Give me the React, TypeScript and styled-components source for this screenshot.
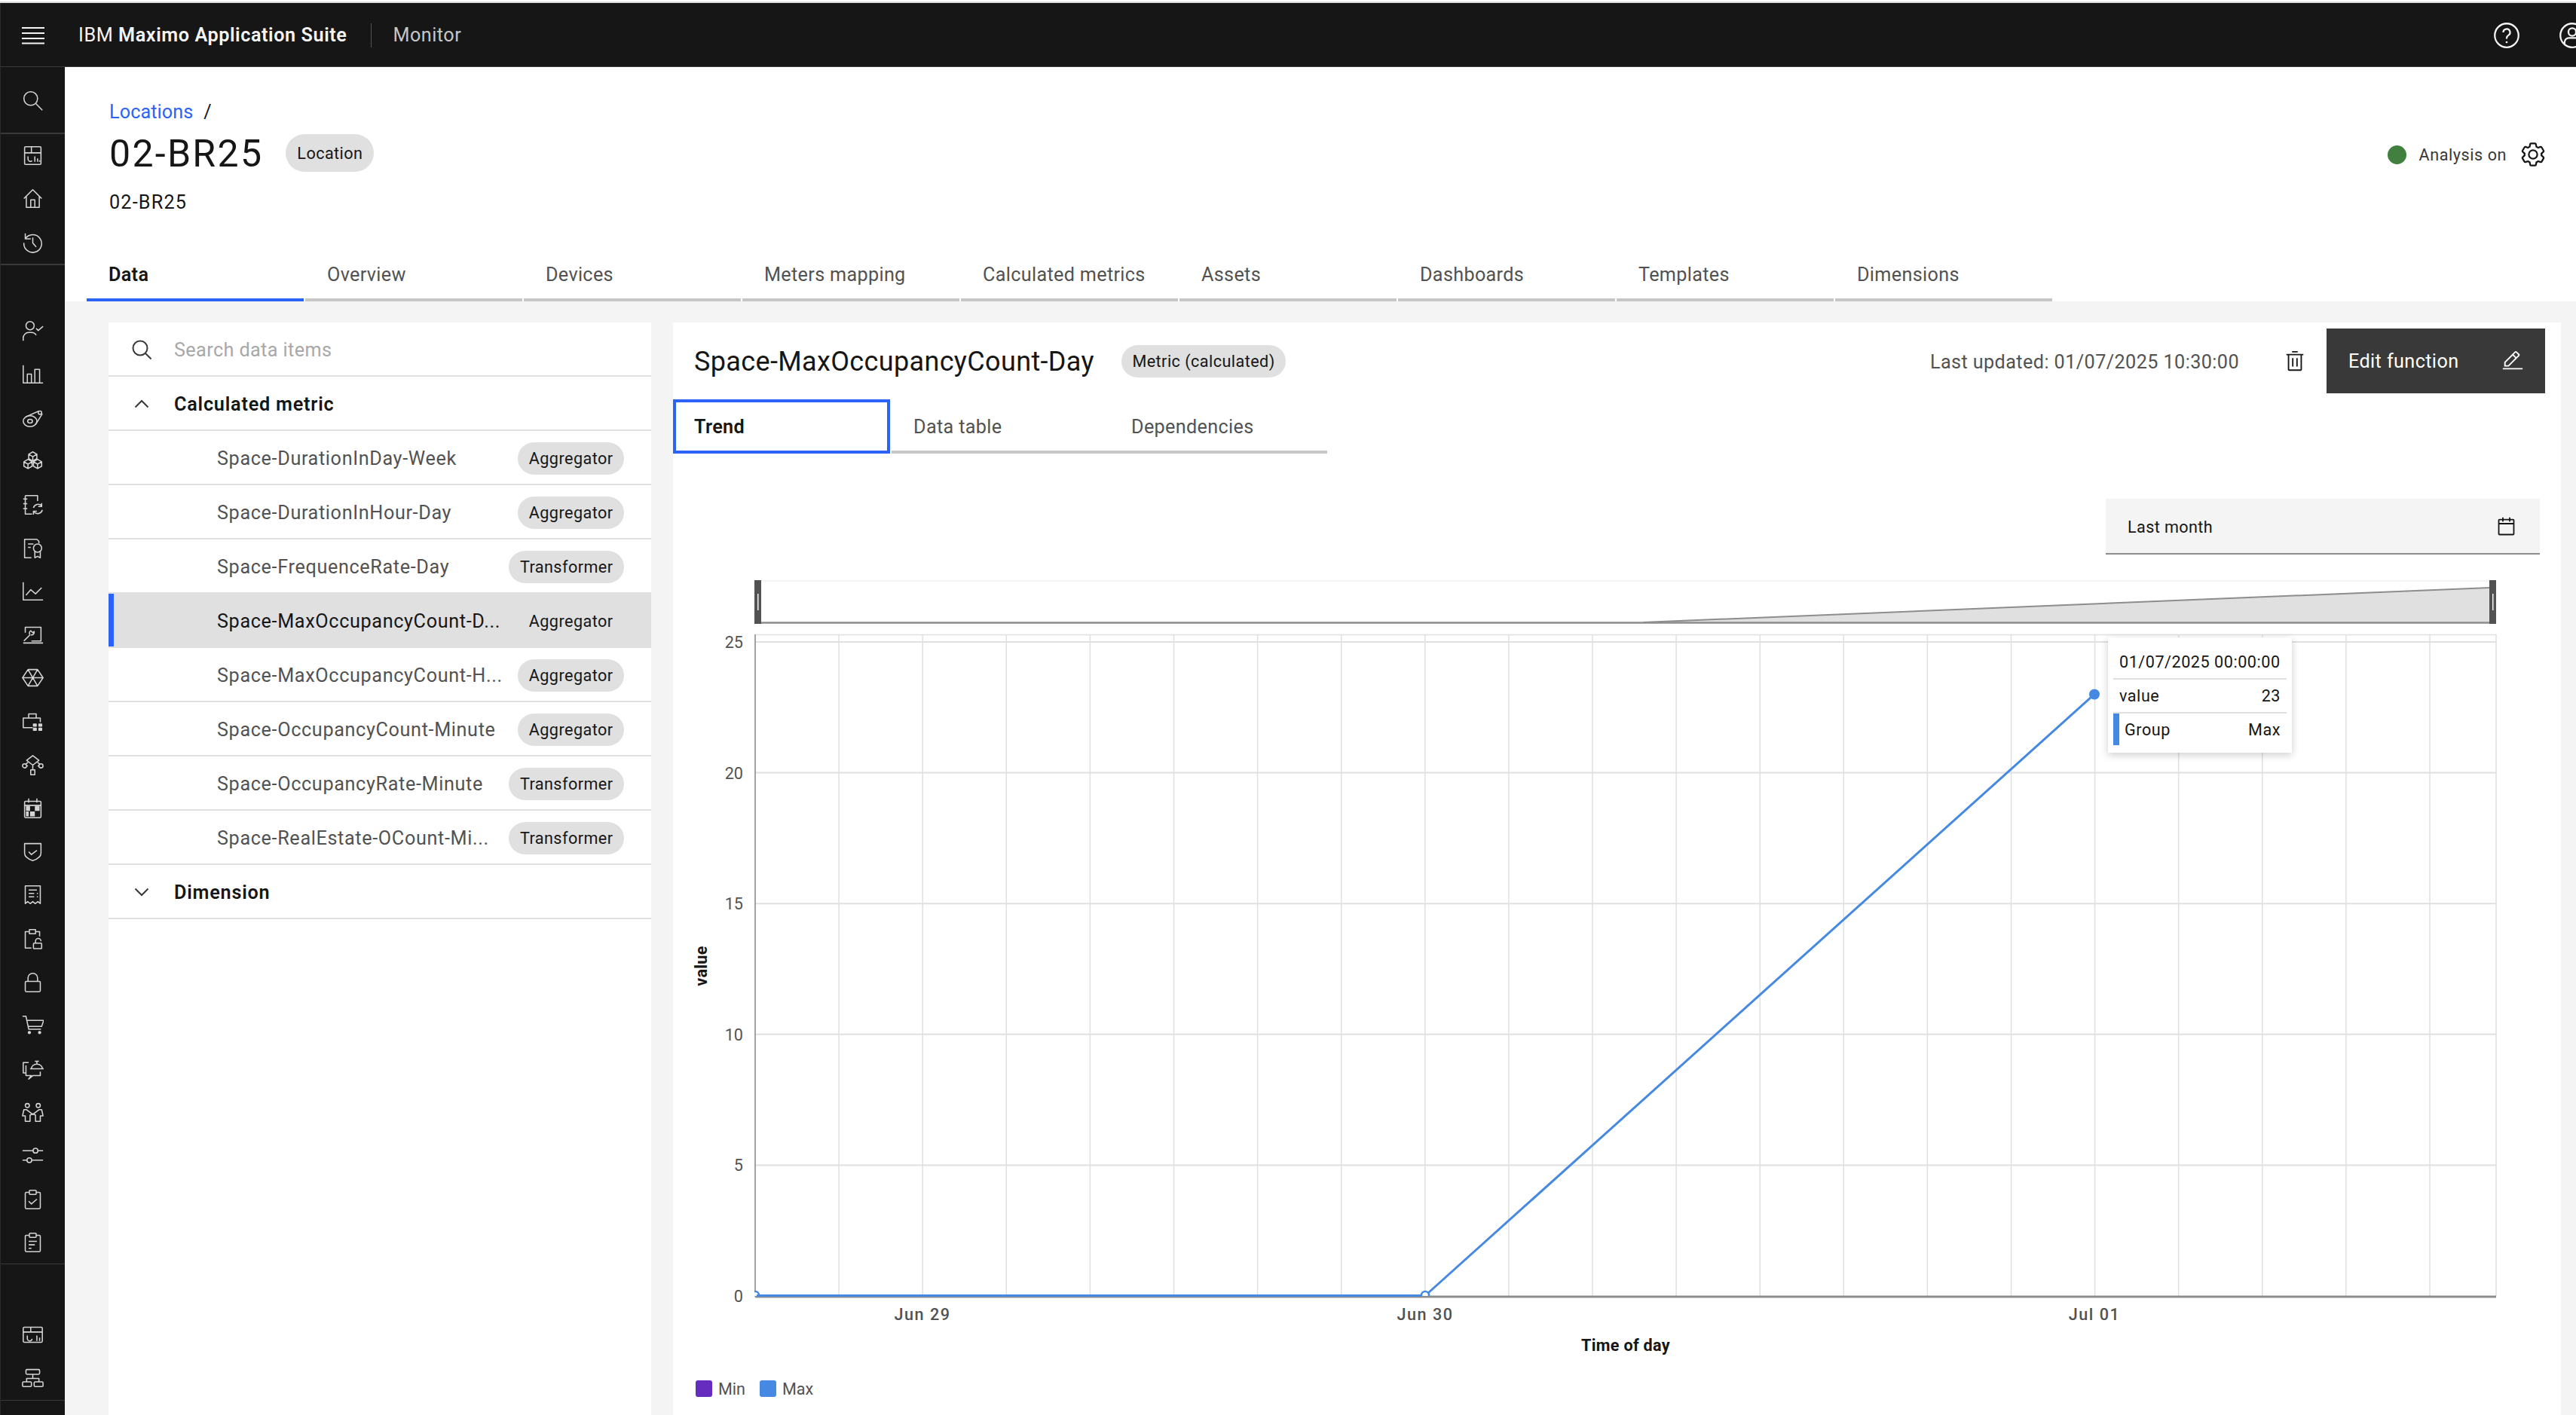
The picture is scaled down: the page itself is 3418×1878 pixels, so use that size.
import React from 'react';
import styled, { createGlobalStyle } from 'styled-components';

const GlobalStyle = createGlobalStyle`
  html, body { margin: 0; padding: 0; background: #fff; }
  body { font-family: Roboto, "Liberation Sans", sans-serif; color: #161616; }
  * { box-sizing: border-box; }
`;

const BLUE = '#2b63f6';
const CHART_BLUE = '#4589e3';

const Page = styled.div`
  width: 3418px;
  height: 1878px;
  padding-top: 2px;
  overflow: hidden;
  display: flex;
  flex-direction: column;
  background: #fff;
`;

const TopStrip = styled.div`
  height: 2px;
  flex: none;
  background: #dcdcdc;
`;

const Header = styled.header`
  height: 85px;
  flex: none;
  padding-top: 1px;
  display: flex;
  align-items: center;
  background: #161616;
  border-bottom: 1px solid #393939;
  border-left: 1px solid #2a2a2a;
  color: #f4f4f4;
`;

const Burger = styled.svg`
  width: 30px;
  height: 24px;
  margin-left: 28px;
  margin-right: 45px;
  flex: none;
`;

const Brand = styled.div`
  font-size: 25.2px;
  letter-spacing: 0.58px;
  white-space: nowrap;
  b { font-weight: 600; }
`;

const HeaderDivider = styled.div`
  width: 1px;
  height: 32px;
  margin: 0 28px 0 32px;
  background: #525252;
`;

const AppName = styled.div`
  font-size: 25.2px;
  letter-spacing: 0.5px;
  color: #c6c6c6;
`;

const HeaderActions = styled.div`
  margin-left: auto;
  margin-right: -13px;
  display: flex;
  gap: 51px;
  svg { width: 36px; height: 36px; flex: none; }
`;

const Body = styled.div`
  flex: 1;
  min-height: 0;
  display: flex;
`;

const Rail = styled.nav`
  width: 86px;
  flex: none;
  background: #161616;
  border-left: 1px solid #2a2a2a;
  display: flex;
  flex-direction: column;
`;

const RailGroup = styled.div<{ $top: number; $bottom: number }>`
  padding: ${(p) => p.$top}px 0 ${(p) => p.$bottom}px;
  border-bottom: 2px solid #393939;
  &:nth-child(n + 3) { border-bottom-width: 1px; }
`;

const RailButton = styled.div`
  height: 57.6px;
  display: flex;
  align-items: center;
  justify-content: center;
  color: #d4d4d4;
`;

const RailIcon = styled.svg`
  width: 29px;
  height: 29px;
  fill: none;
  stroke: currentColor;
  stroke-width: 1.7;
  stroke-linejoin: round;
`;

const Main = styled.main`
  flex: 1;
  min-width: 0;
  display: flex;
  flex-direction: column;
`;

const PageHead = styled.section`
  height: 311px;
  flex: none;
  background: #fff;
  display: flex;
  flex-direction: column;
`;

const HeadTop = styled.div`
  flex: 1;
  padding: 44px 41px 0 59px;
  display: flex;
  justify-content: space-between;
`;

const Crumb = styled.div`
  height: 30px;
  padding-top: 1px;
  font-size: 25.2px;
  line-height: 30px;
  letter-spacing: 0.1px;
  a { color: ${BLUE}; text-decoration: none; }
  span { margin-left: 14px; }
`;

const TitleRow = styled.div`
  margin-top: 14px;
  display: flex;
  align-items: center;
  gap: 30px;
`;

const PageTitle = styled.h1`
  margin: 0;
  padding-top: 2px;
  font-size: 50px;
  line-height: 50px;
  font-weight: 400;
  letter-spacing: 2.3px;
`;

const Tag = styled.span`
  display: inline-flex;
  align-items: center;
  height: 43px;
  padding: 0 14.5px;
  border-radius: 25px;
  font-size: 21.6px;
  letter-spacing: 0.45px;
  white-space: nowrap;
  background: #e0e0e0;
  color: #161616;
`;

const BigTag = styled(Tag)`
  height: 50px;
  padding: 0 15px;
`;

const SubTitle = styled.div`
  margin-top: 25px;
  font-size: 25.2px;
  line-height: 30px;
  letter-spacing: 1.2px;
`;

const Status = styled.div`
  margin-top: 54px;
  height: 36px;
  display: flex;
  align-items: center;
  font-size: 21.6px;
  letter-spacing: 0.55px;
  color: #393939;
  svg { width: 36px; height: 36px; margin-left: 17px; margin-right: -2px; fill: #161616; }
`;

const StatusDot = styled.span`
  width: 25px;
  height: 25px;
  margin-right: 17px;
  border-radius: 50%;
  background: #42803f;
`;

const PageTabs = styled.div`
  margin-left: 29px;
  display: flex;
  gap: 2px;
`;

const Tab = styled.div<{ $active?: boolean }>`
  width: 288px;
  height: 70px;
  padding: 2px 0 0 29px;
  display: flex;
  align-items: center;
  font-size: 25.2px;
  letter-spacing: 0.33px;
  font-weight: ${(p) => (p.$active ? 600 : 400)};
  color: ${(p) => (p.$active ? '#161616' : '#525252')};
  border-bottom: 4px solid ${(p) => (p.$active ? BLUE : '#c6c6c6')};
`;

const Content = styled.div`
  flex: 1;
  min-height: 0;
  padding: 28px 20px 0 58px;
  background: #f4f4f4;
  display: flex;
  gap: 29px;
  overflow: hidden;
`;

const ListPanel = styled.aside`
  width: 720px;
  flex: none;
  background: #fff;
`;

const SearchRow = styled.div`
  height: 72px;
  padding-top: 2px;
  display: flex;
  align-items: center;
  border-bottom: 2px solid #e0e0e0;
  font-size: 25.2px;
  letter-spacing: 0.4px;
  color: #a8a8a8;
`;

const IconSlot = styled.span`
  width: 87px;
  flex: none;
  display: flex;
  justify-content: center;
  svg { display: block; fill: none; stroke: #393939; stroke-width: 2; }
`;

const SectionRow = styled.div`
  height: 72px;
  padding-top: 2px;
  display: flex;
  align-items: center;
  border-bottom: 2px solid #e0e0e0;
  font-size: 25.2px;
  font-weight: 600;
  letter-spacing: 0.8px;
`;

const ItemRow = styled.div<{ $selected?: boolean }>`
  height: 72px;
  padding: 2px 36px 0 144px;
  display: flex;
  align-items: center;
  justify-content: space-between;
  border-bottom: 2px solid #e0e0e0;
  font-size: 25.2px;
  letter-spacing: 0.65px;
  white-space: nowrap;
  color: ${(p) => (p.$selected ? '#161616' : '#525252')};
  background: ${(p) => (p.$selected ? '#e0e0e0' : '#fff')};
  box-shadow: ${(p) => (p.$selected ? `inset 7px 0 0 ${BLUE}` : 'none')};
`;

const ChartPanel = styled.section`
  position: relative;
  flex: 1;
  min-width: 0;
  background: #fff;
  display: flex;
  flex-direction: column;
`;

const PanelToolbar = styled.div`
  margin-top: 8px;
  height: 86px;
  padding: 0 21px 0 28px;
  display: flex;
  align-items: center;
`;

const MetricTitle = styled.h2`
  margin: 0 36px 0 0;
  padding-top: 2px;
  font-size: 36px;
  font-weight: 400;
  letter-spacing: 0.36px;
`;

const Updated = styled.div`
  margin-left: auto;
  padding-top: 2px;
  font-size: 25.2px;
  letter-spacing: 0.42px;
  color: #525252;
`;

const TrashIcon = styled.svg`
  width: 30px;
  height: 30px;
  margin: 0 27px 0 59px;
  fill: #161616;
`;

const EditButton = styled.div`
  width: 290px;
  height: 86px;
  padding: 0 28px 0 29px;
  display: flex;
  align-items: center;
  justify-content: space-between;
  background: #393939;
  color: #fff;
  font-size: 25.2px;
  letter-spacing: 0.4px;
  svg { width: 30px; height: 30px; fill: #fff; }
`;

const PanelTabs = styled.div`
  margin-top: 8px;
  display: flex;
`;

const PanelTab = styled.div<{ $active?: boolean }>`
  width: ${(p) => (p.$active ? 288 : 289)}px;
  margin-right: ${(p) => (p.$active ? 2 : 0)}px;
  height: 72px;
  padding-left: ${(p) => (p.$active ? 24 : 29)}px;
  display: flex;
  align-items: center;
  font-size: 25.2px;
  letter-spacing: 0.35px;
  font-weight: ${(p) => (p.$active ? 600 : 400)};
  color: ${(p) => (p.$active ? '#161616' : '#525252')};
  border: ${(p) => (p.$active ? `4px solid ${BLUE}` : 'none')};
  border-top: 4px solid ${(p) => (p.$active ? BLUE : 'transparent')};
  border-bottom: 4px solid ${(p) => (p.$active ? BLUE : '#c6c6c6')};
`;

const DateField = styled.div`
  align-self: flex-end;
  width: 576px;
  height: 74px;
  margin: 60px 28px 0 0;
  padding: 2px 30px 0 29px;
  display: flex;
  align-items: center;
  justify-content: space-between;
  background: #f4f4f4;
  border-bottom: 2px solid #8d8d8d;
  font-size: 21.6px;
  letter-spacing: 0.4px;
  svg { width: 29px; height: 29px; fill: #161616; }
`;

const ChartSvg = styled.svg`
  display: block;
  width: 2505px;
  height: 1142px;
  flex: none;
  text {
    font-family: Roboto, "Liberation Sans", sans-serif;
    font-size: 21.6px;
    fill: #525252;
  }
`;

const AxisTick = styled.text`
  font-weight: 500;
  letter-spacing: 1.5px;
`;

const AxisTitle = styled.text`
  font-weight: 700;
  letter-spacing: 0.3px;
  && { fill: #161616; }
`;

const Tooltip = styled.div`
  position: absolute;
  left: 1904px;
  top: 418px;
  width: 244px;
  height: 153px;
  padding: 1px 7px 0;
  background: #fff;
  box-shadow: 0 3px 10px rgba(0, 0, 0, 0.2);
  font-size: 21.6px;
  letter-spacing: 0.53px;
  color: #161616;
`;

const TipRow = styled.div<{ $marker?: boolean; $height: number; $pad?: number }>`
  height: ${(p) => p.$height}px;
  padding: ${(p) => p.$pad || 0}px 8px 0 ${(p) => (p.$marker ? 7 : 8)}px;
  display: flex;
  align-items: center;
  justify-content: space-between;
  border-left: ${(p) => (p.$marker ? `8px solid ${CHART_BLUE}` : 'none')};
  &:not(:last-child) { border-bottom: 2px solid #e0e0e0; }
`;

const railGroups: { top: number; bottom: number; icons: React.ReactNode[] }[] = [
  {
    top: 16,
    bottom: 13,
    icons: [<><circle cx="13" cy="13" r="10" /><path d="M20.5 20.5L30 30" /></>],
  },
  {
    top: 0,
    bottom: 0,
    icons: [
      <><rect x="4" y="3" width="24" height="26" rx="1.5" /><path d="M4 12h24M14 3v9M9 17v4a3.5 3.5 0 0 0 6 2.5M19 17v8M23 20v5M26 23v2" /></>,
      <><path d="M3 16L16 3l13 13M6.5 13v16h19V13M13 29V18h6v11" /></>,
      <><path d="M5 11a13 13 0 1 1-2 6M5 3v8h8M16 9v8l5 6" /></>,
    ],
  },
  {
    top: 58,
    bottom: 0,
    icons: [
      <><circle cx="12" cy="8" r="6" /><path d="M2 30v-4a8 8 0 0 1 8-8h4a8 8 0 0 1 7 4M21 12l3 3 7-6" /></>,
      <><path d="M2 3v26h29M8 29V16h6v13M19 29V9h7v20" /></>,
      <><ellipse cx="12" cy="21" rx="10" ry="8" /><ellipse cx="12" cy="21" rx="3.5" ry="2.8" /><path d="M6 14.5L25 6M20 26L30 10" /><circle cx="26.5" cy="8.5" r="2.5" /></>,
      <><path d="M16 3l6 3.5v6.5l-6 3.5-6-3.5V6.5zM10 6.5l6 3.5 6-3.5M16 10v6.5M9 14l6 3.5V24l-6 3.5L3 24v-6.5zM3 17.5L9 21l6-3.5M9 21v6.5M23 14l6 3.5V24l-6 3.5-6-3.5v-6.5zM17 17.5L23 21l6-3.5M23 21v6.5" /></>,
      <><path d="M5 3h18v8M5 3v27h10M2 8h6M2 15h6M2 22h6M17 21a7 7 0 0 1 12-3M29 14v5h-5M30 24a7 7 0 0 1-12 3M17 31v-5h5" /></>,
      <><path d="M22 3H4v27h10M22 3l3 3v3M9 10h8M9 15h4" /><circle cx="23" cy="16" r="6" /><path d="M19 21v9l4-2 4 2v-9" /></>,
      <><path d="M2 3v26h29M6 22l7-8 7 6 9-9" /></>,
      <><path d="M5 13V5h23v20H14M2 28h29M3 25l9-9M12 16a4 4 0 0 1 1-6l3 3 2-2a4 4 0 0 1-5 5" /></>,
      <><path d="M9 4h14l8 12-8 12H9L1 16zM1 16h30M9 4l14 24M23 4L9 28" /></>,
      <><path d="M16 25H2V11h25v6M10 11V5h11v6" /><path d="M17 20h4v3h-4zM25 20h4v3h-4zM17 26h4v3h-4zM25 26h4v3h-4z" fill="currentColor" /></>,
      <><path d="M16 2l9 7-9 7-9-7zM16 16v7M5 15l4-3M27 15l-4-3M13 23h6v7h-6z" /><circle cx="4" cy="17" r="3" /><circle cx="28" cy="17" r="3" /><path d="M7 17h2M23 17h2" /></>,
      <><rect x="4" y="6" width="24" height="24" rx="1.5" /><path d="M10 2v6M22 2v6M4 12h24" /><path d="M6 13h6v7H6zM19 13h7v7h-7zM12 21h7v7h-7zM6 21h4v7H6z" fill="currentColor" stroke="none" /></>,
      <><path d="M4 4h24v14c0 6-6 9-12 11C10 27 4 24 4 18zM10 16l4 4 8-6" /></>,
      <><path d="M5 3h22v26l-3.6-3-3.6 3-3.800-3-3.800 3-3.600-3L5 29zM10 9h12M10 14h8M10 19h8M22 14h1.500M22 19h1.500" /></>,
      <><path d="M10 6H5v24h9M20 6h6v7M11 3h9v6h-9z" /><rect x="17" y="23" width="12" height="8" rx="1" /><path d="M20 23v-3a4 4 0 0 1 8 0" /></>,
      <><rect x="5" y="15" width="22" height="15" rx="1.5" /><path d="M9 15v-5a7 7 0 0 1 14 0v5" /></>,
      <><path d="M1 3h5l4 19h18M8 9h24l-3 9H9" /><circle cx="11" cy="27" r="1.5" fill="currentColor" /><circle cx="26" cy="27" r="1.5" fill="currentColor" /></>,
      <><path d="M12 16h20M14 16a8 7 0 0 1 16 0M19 5h6M22 5v4M10 7H2v15h4M6 11v15h8l-4 5 6-5h11v-6" /></>,
      <><circle cx="8" cy="7" r="3" /><circle cx="24" cy="7" r="3" /><path d="M7 13H3l-2 9h4v8h7v-9l4-2 4 2v9h7v-8h4l-2-9h-4l-9 7z" /></>,
      <><path d="M1 9h30M1 23h30" /><circle cx="20" cy="9" r="3.5" fill="#161616" /><circle cx="11" cy="23" r="3.5" fill="#161616" /></>,
      <><rect x="5" y="6" width="22" height="24" rx="1.5" /><rect x="11" y="3" width="10" height="6" rx="1" fill="#161616" /><path d="M10 19l4 4 8-7" /></>,
      <><rect x="5" y="6" width="22" height="24" rx="1.5" /><rect x="11" y="3" width="10" height="6" rx="1" fill="#161616" /><path d="M10 15h12M10 20h9M10 25h4" /></>,
    ],
  },
  {
    top: 64,
    bottom: 0,
    icons: [
      <><rect x="2" y="5" width="28" height="22" rx="1.5" /><path d="M2 12h28M13 5v7M8 17v4a3.5 3.5 0 0 0 7 1M22 17v8M26 20v5" /></>,
      <><rect x="6" y="4" width="20" height="7" rx="1.5" /><rect x="1" y="22" width="13" height="7" rx="1.5" /><rect x="18" y="22" width="13" height="7" rx="1.5" /><path d="M16 11v6M7 22v-5h18v5" /></>,
    ],
  },
];

const topTabs = ['Data', 'Overview', 'Devices', 'Meters mapping', 'Calculated metrics', 'Assets', 'Dashboards', 'Templates', 'Dimensions'];

const items = [
  { name: 'Space-DurationInDay-Week', kind: 'Aggregator' },
  { name: 'Space-DurationInHour-Day', kind: 'Aggregator' },
  { name: 'Space-FrequenceRate-Day', kind: 'Transformer' },
  { name: 'Space-MaxOccupancyCount-D...', kind: 'Aggregator', selected: true },
  { name: 'Space-MaxOccupancyCount-H...', kind: 'Aggregator' },
  { name: 'Space-OccupancyCount-Minute', kind: 'Aggregator' },
  { name: 'Space-OccupancyRate-Minute', kind: 'Transformer' },
  { name: 'Space-RealEstate-OCount-Mi...', kind: 'Transformer' },
];

const GEAR =
  'M27,16.76c0-.25,0-.5,0-.76s0-.51,0-.77l1.92-1.68A2,2,0,0,0,29.3,11L26.94,7a2,2,0,0,0-1.73-1,2,2,0,0,0-.64.1l-2.43.82a11.35,11.35,0,0,0-1.31-.75l-.51-2.52a2,2,0,0,0-2-1.61H13.64a2,2,0,0,0-2,1.61l-.51,2.52a11.48,11.48,0,0,0-1.32.75L7.43,6.06A2,2,0,0,0,6.79,6,2,2,0,0,0,5.06,7L2.7,11a2,2,0,0,0,.41,2.51L5,15.24c0,.25,0,.5,0,.76s0,.51,0,.77L3.11,18.45A2,2,0,0,0,2.7,21L5.06,25a2,2,0,0,0,1.73,1,2,2,0,0,0,.64-.1l2.43-.82a11.35,11.35,0,0,0,1.31.75l.51,2.52a2,2,0,0,0,2,1.61h4.72a2,2,0,0,0,2-1.61l.51-2.52a11.48,11.48,0,0,0,1.32-.75l2.42.82a2,2,0,0,0,.64.1,2,2,0,0,0,1.73-1L29.3,21a2,2,0,0,0-.41-2.51ZM25.21,24l-3.43-1.16a8.86,8.86,0,0,1-2.71,1.57L18.36,28H13.64l-.71-3.55a9.36,9.36,0,0,1-2.7-1.57L6.79,24,4.43,20l2.72-2.4a8.9,8.9,0,0,1,0-3.13L4.43,12,6.79,8l3.43,1.16a8.86,8.86,0,0,1,2.71-1.57L13.64,4h4.72l.71,3.55a9.36,9.36,0,0,1,2.7,1.57L25.21,8,27.57,12l-2.72,2.4a8.9,8.9,0,0,1,0,3.13L27.57,20ZM16,22a6,6,0,1,1,6-6A5.94,5.94,0,0,1,16,22Zm0-10a3.91,3.91,0,0,0-4,4,3.91,3.91,0,0,0,4,4,3.91,3.91,0,0,0,4-4A3.91,3.91,0,0,0,16,12Z';

function Chart() {
  const grid = Array.from({ length: 21 }, (_, i) => 1002 + i * 111.1);
  const ticks = [0, 5, 10, 15, 20, 25];
  const y = (v: number) => 1720 - v * 34.72;
  return (
    <ChartSvg viewBox="893 736 2505 1142">
      <defs>
        <clipPath id="plot">
          <rect x="1001" y="842" width="2311" height="878" />
        </clipPath>
      </defs>

      {/* brush */}
      <path d="M1010 771H3303" stroke="#f4f4f4" strokeWidth="2" />
      <path d="M2180 826L3303 780V826Z" fill="#e0e0e0" stroke="none" />
      <path d="M2180 826L3303 780" stroke="#8d8d8d" strokeWidth="2" fill="none" />
      <path d="M1005 826.5H3308" stroke="#8d8d8d" strokeWidth="2.5" />
      <rect x="1001" y="770" width="9" height="58" fill="#525252" />
      <rect x="3303" y="770" width="9" height="58" fill="#525252" />
      <rect x="1005" y="788" width="1.5" height="22" fill="#f4f4f4" />
      <rect x="3307" y="788" width="1.5" height="22" fill="#f4f4f4" />

      {/* grid */}
      {grid.map((x) => (
        <path key={x} d={`M${x} 842V1720`} stroke="#e0e0e0" strokeWidth="1.5" />
      ))}
      <path d="M1002 842.5H3312M3312 842V1720" stroke="#e0e0e0" strokeWidth="1.5" />
      {ticks.map((t) => (
        <React.Fragment key={t}>
          {t > 0 && <path d={`M1002 ${y(t)}H3312`} stroke="#e0e0e0" strokeWidth="2" />}
          <text x="986" y={y(t) + 8} textAnchor="end">{t}</text>
        </React.Fragment>
      ))}
      <path d="M1002 842V1721" stroke="#8d8d8d" strokeWidth="1.5" />
      <path d="M1002 1721H3312" stroke="#8d8d8d" strokeWidth="3" />

      {/* series */}
      <g clipPath="url(#plot)">
        <circle cx="1002" cy="1719" r="5" fill="#fff" stroke={CHART_BLUE} strokeWidth="2.5" />
        <circle cx="1891" cy="1719" r="5" fill="#fff" stroke={CHART_BLUE} strokeWidth="2.5" />
      </g>
      <path d={`M1004 1719.5H1886M1895 1716L2779 ${y(23)}`} fill="none" stroke={CHART_BLUE} strokeWidth="3" />
      <circle cx="2779" cy={y(23)} r="7" fill={CHART_BLUE} />

      {/* axis labels */}
      <AxisTick x="1224" y="1752" textAnchor="middle">Jun 29</AxisTick>
      <AxisTick x="1891" y="1752" textAnchor="middle">Jun 30</AxisTick>
      <AxisTick x="2779" y="1752" textAnchor="middle">Jul 01</AxisTick>
      <AxisTitle x="2157" y="1793" textAnchor="middle">Time of day</AxisTitle>
      <AxisTitle x="938" y="1282" textAnchor="middle" transform="rotate(-90 938 1282)">value</AxisTitle>

      {/* legend */}
      <rect x="923" y="1832" width="22" height="22" rx="3" fill="#642dbf" />
      <text x="953" y="1851">Min</text>
      <rect x="1008" y="1832" width="22" height="22" rx="3" fill={CHART_BLUE} />
      <text x="1038" y="1851">Max</text>
    </ChartSvg>
  );
}

export default function App() {
  return (
    <Page>
      <GlobalStyle />
      <TopStrip />
      <Header>
        <Burger viewBox="0 0 30 24" fill="none" stroke="#f4f4f4" strokeWidth="2">
          <path d="M0 2h30M0 9h30M0 16h30M0 22.5h30" />
        </Burger>
        <Brand>IBM <b>Maximo Application Suite</b></Brand>
        <HeaderDivider />
        <AppName>Monitor</AppName>
        <HeaderActions>
          <svg viewBox="0 0 32 32" fill="none" stroke="#f4f4f4" strokeWidth="2">
            <circle cx="16" cy="16" r="14" />
            <path d="M12 12.5a4 4 0 1 1 6 3.4c-1.3.8-2 1.5-2 3.1v1" />
            <circle cx="16" cy="24" r="1.2" fill="#f4f4f4" stroke="none" />
          </svg>
          <svg viewBox="0 0 32 32" fill="none" stroke="#f4f4f4" strokeWidth="2">
            <circle cx="16" cy="16" r="14" />
            <circle cx="16" cy="12" r="4.5" />
            <path d="M7 26v-2a5 5 0 0 1 5-5h8a5 5 0 0 1 5 5v2" />
          </svg>
        </HeaderActions>
      </Header>
      <Body>
        <Rail>
          {railGroups.map((group, g) => (
            <RailGroup key={g} $top={group.top} $bottom={group.bottom}>
              {group.icons.map((icon, i) => (
                <RailButton key={i}>
                  <RailIcon viewBox="0 0 32 32">{icon}</RailIcon>
                </RailButton>
              ))}
            </RailGroup>
          ))}
        </Rail>
        <Main>
          <PageHead>
            <HeadTop>
              <div>
                <Crumb><a href="#locations">Locations</a><span>/</span></Crumb>
                <TitleRow>
                  <PageTitle>02-BR25</PageTitle>
                  <BigTag>Location</BigTag>
                </TitleRow>
                <SubTitle>02-BR25</SubTitle>
              </div>
              <Status>
                <StatusDot />
                Analysis on
                <svg viewBox="0 0 32 32"><path d={GEAR} /></svg>
              </Status>
            </HeadTop>
            <PageTabs>
              {topTabs.map((t, i) => (
                <Tab key={t} $active={i === 0}>{t}</Tab>
              ))}
            </PageTabs>
          </PageHead>
          <Content>
            <ListPanel>
              <SearchRow>
                <IconSlot>
                  <svg width="26" height="26" viewBox="0 0 26 26"><circle cx="11" cy="11" r="9.5" /><path d="M18 18l7.5 7.5" /></svg>
                </IconSlot>
                Search data items
              </SearchRow>
              <SectionRow>
                <IconSlot>
                  <svg width="20" height="12" viewBox="0 0 20 12"><path d="M1.5 10.5L10 2l8.5 8.5" /></svg>
                </IconSlot>
                Calculated metric
              </SectionRow>
              {items.map((item) => (
                <ItemRow key={item.name} $selected={item.selected}>
                  {item.name}
                  <Tag>{item.kind}</Tag>
                </ItemRow>
              ))}
              <SectionRow>
                <IconSlot>
                  <svg width="20" height="12" viewBox="0 0 20 12"><path d="M1.5 1.5L10 10l8.5-8.5" /></svg>
                </IconSlot>
                Dimension
              </SectionRow>
            </ListPanel>
            <ChartPanel>
              <PanelToolbar>
                <MetricTitle>Space-MaxOccupancyCount-Day</MetricTitle>
                <Tag>Metric (calculated)</Tag>
                <Updated>Last updated: 01/07/2025 10:30:00</Updated>
                <TrashIcon viewBox="0 0 32 32">
                  <path d="M12 12h2v12h-2zM18 12h2v12h-2zM4 6v2h2v20a2 2 0 0 0 2 2h16a2 2 0 0 0 2-2V8h2V6Zm4 22V8h16v20ZM12 2h8v2h-8z" />
                </TrashIcon>
                <EditButton>
                  Edit function
                  <svg viewBox="0 0 32 32"><path d="M2 26h28v2H2zM25.4 9c.8-.8.8-2 0-2.8l-3.6-3.6c-.8-.8-2-.8-2.8 0l-15 15V24h6.4l15-15zm-5-5L24 7.6l-3 3L17.4 7l3-3zM6 22v-3.6l10-10l3.6 3.6l-10 10H6z" /></svg>
                </EditButton>
              </PanelToolbar>
              <PanelTabs>
                <PanelTab $active>Trend</PanelTab>
                <PanelTab>Data table</PanelTab>
                <PanelTab>Dependencies</PanelTab>
              </PanelTabs>
              <DateField>
                Last month
                <svg viewBox="0 0 32 32"><path d="M26 4h-4V2h-2v2h-8V2h-2v2H6C4.9 4 4 4.9 4 6v20c0 1.1.9 2 2 2h20c1.100 0 2-.9 2-2V6c0-1.100-.9-2-2-2zm0 22H6V12h20v14zm0-16H6V6h4v2h2V6h8v2h2V6h4v4z" /></svg>
              </DateField>
              <Chart />
              <Tooltip>
                <TipRow $height={55} $pad={10}>01/07/2025 00:00:00</TipRow>
                <TipRow $height={45}>
                  <span>value</span>
                  <span>23</span>
                </TipRow>
                <TipRow $marker $height={42}>
                  <span>Group</span>
                  <span>Max</span>
                </TipRow>
              </Tooltip>
            </ChartPanel>
          </Content>
        </Main>
      </Body>
    </Page>
  );
}
